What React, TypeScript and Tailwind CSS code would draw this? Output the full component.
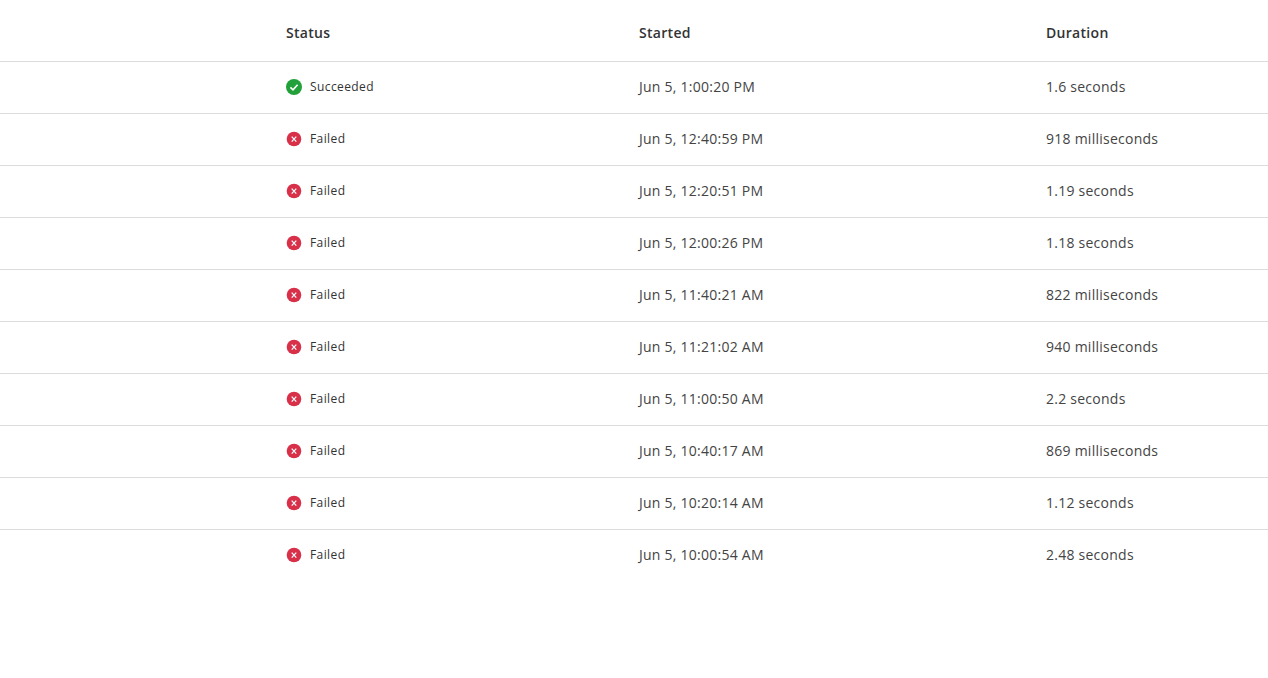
const GRID = "grid grid-cols-[286px_353px_407px_1fr] items-center";

const runs = [
  { ok: true, started: "Jun 5, 1:00:20 PM", duration: "1.6 seconds" },
  { ok: false, started: "Jun 5, 12:40:59 PM", duration: "918 milliseconds" },
  { ok: false, started: "Jun 5, 12:20:51 PM", duration: "1.19 seconds" },
  { ok: false, started: "Jun 5, 12:00:26 PM", duration: "1.18 seconds" },
  { ok: false, started: "Jun 5, 11:40:21 AM", duration: "822 milliseconds" },
  { ok: false, started: "Jun 5, 11:21:02 AM", duration: "940 milliseconds" },
  { ok: false, started: "Jun 5, 11:00:50 AM", duration: "2.2 seconds" },
  { ok: false, started: "Jun 5, 10:40:17 AM", duration: "869 milliseconds" },
  { ok: false, started: "Jun 5, 10:20:14 AM", duration: "1.12 seconds" },
  { ok: false, started: "Jun 5, 10:00:54 AM", duration: "2.48 seconds" },
];

function StatusIcon({ ok }: { ok: boolean }) {
  if (ok) {
    return (
      <svg width="16" height="16" viewBox="0 0 16 16" className="shrink-0">
        <circle cx="8" cy="8" r="8" fill="#22a03a" />
        <path d="M4.4 8.3 L7 10.8 L11.6 5.8" fill="none" stroke="#fff" strokeWidth="1.6" />
      </svg>
    );
  }
  return (
    <svg width="16" height="16" viewBox="0 0 16 16" className="shrink-0">
      <circle cx="8" cy="8" r="7.3" fill="#d9304a" />
      <path d="M5.7 5.6 L10.3 10.6 M10.3 5.6 L5.7 10.6" fill="none" stroke="#fff" strokeWidth="1.2" />
    </svg>
  );
}

export default function App() {
  return (
    <div className="min-h-[678px] bg-white font-['Open_Sans',sans-serif]">
      {/* header row */}
      <div className={`${GRID} h-[62px] pt-[5px] border-b border-[#dcdcdc] text-sm font-semibold tracking-[0.3px] text-[#333333]`}>
        <div />
        <div>Status</div>
        <div>Started</div>
        <div>Duration</div>
      </div>

      {runs.map((run) => (
        <div key={run.started} className={`${GRID} h-[52px] pb-[2px] border-b border-[#dcdcdc] last:border-b-0 text-sm tracking-[0.25px] text-[#444444]`}>
          <div />
          <div className="flex items-center gap-2 text-xs tracking-[0.4px] text-[#333333]">
            <StatusIcon ok={run.ok} />
            {run.ok ? "Succeeded" : "Failed"}
          </div>
          <div>{run.started}</div>
          <div>{run.duration}</div>
        </div>
      ))}
    </div>
  );
}
